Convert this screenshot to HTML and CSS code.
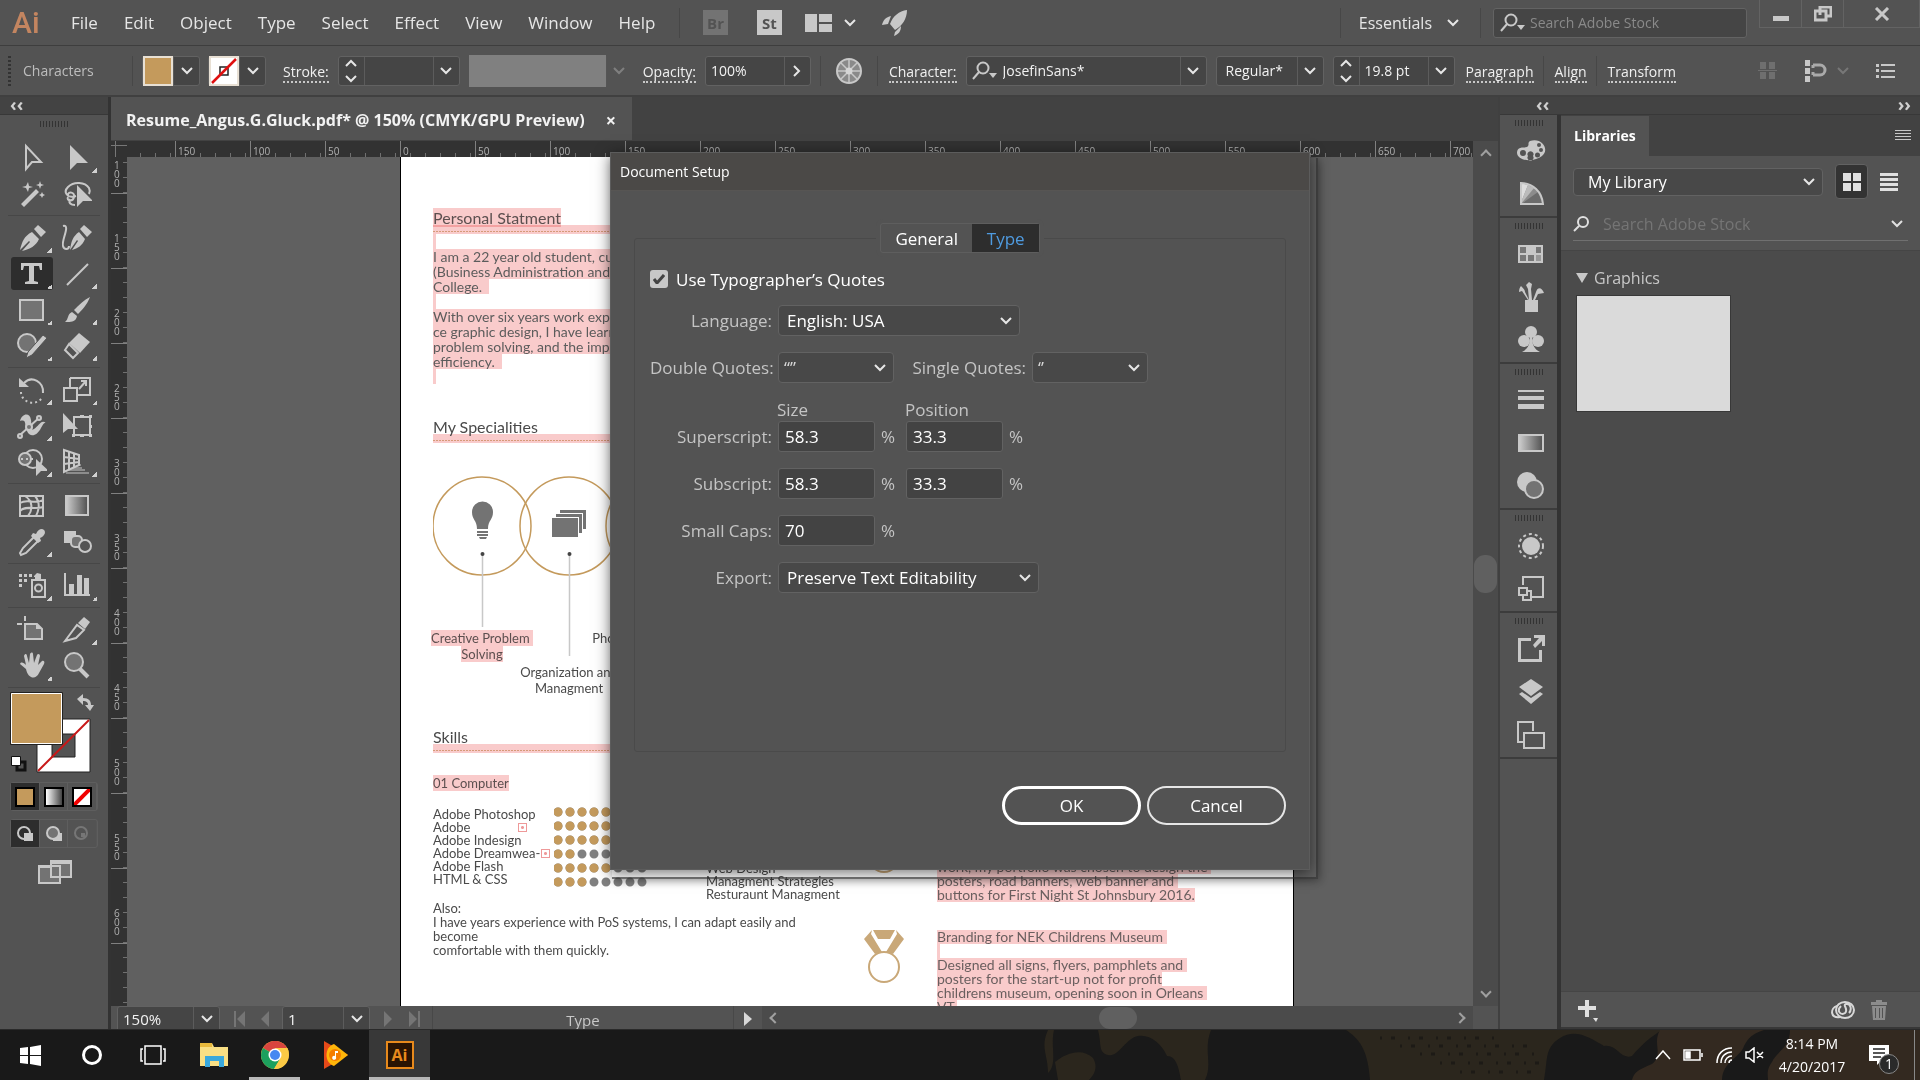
FILE: index.html
```html
<!DOCTYPE html>
<html lang="en">
<head>
<meta charset="UTF-8">
<title>Adobe Illustrator - Document Setup</title>
<link rel="stylesheet" href="styles.css">
</head>
<body>

<!-- menu bar -->
<header class="menubar">
  <div class="logo">Ai</div>
  <nav class="menu">
    <a href="#">File</a><a href="#">Edit</a><a href="#">Object</a><a href="#">Type</a><a href="#">Select</a><a href="#">Effect</a><a href="#">View</a><a href="#">Window</a><a href="#">Help</a>
  </nav>
  <span class="divider"></span>
  <div class="apps">
    <button class="app app-off">Br</button>
    <button class="app">St</button>
    <button class="plain arrange" aria-label="Arrange documents">
      <svg width="28" height="18" viewBox="0 0 28 18"><path d="M0 0h12v18H0zM14 0h13v8H14zM14 10h13v8H14z"/></svg>
      <svg class="chev" width="14" height="8" viewBox="0 0 14 8"><path d="M2 1l5 5 5-5"/></svg>
    </button>
    <button class="plain" aria-label="GPU performance"><svg width="28" height="26" viewBox="0 0 28 26"><path d="M26 0c-8 1-14 6-17 14l5 6C21 16 26 9 26 0zM10 6C5 7 2 10 1 15l6-1zM20 16l-6 6-1 4c5-2 7-5 7-10z"/></svg></button>
  </div>
  <div class="menu-right">
    <span class="divider"></span>
    <button class="plain essentials">Essentials <svg class="chev" width="14" height="8" viewBox="0 0 14 8"><path d="M2 1l5 5 5-5"/></svg></button>
    <span class="divider"></span>
    <label class="stock">
      <svg class="lens" width="26" height="20" viewBox="0 0 26 20"><circle cx="11" cy="7" r="5.5"/><path d="M7 11l-6 7"/><path class="solid" d="M17 12h8l-4 5z"/></svg>
      <input type="text" placeholder="Search Adobe Stock" aria-label="Search Adobe Stock">
    </label>
    <div class="win">
      <button aria-label="Minimize"><svg width="16" height="16"><path d="M0 10h16v5H0z"/></svg></button>
      <button aria-label="Restore"><svg width="18" height="16"><path class="ol" d="M6 9V1h11v9h-4M1 5h11v9H1z"/></svg></button>
      <button class="close" aria-label="Close"><svg width="16" height="14"><path class="ol" d="M2 1l12 12M14 1L2 13"/></svg></button>
    </div>
  </div>
</header>

<!-- control bar -->
<div class="control">
  <span class="grip-v"></span>
  <span class="context">Characters</span>
  <span class="divider"></span>
  <div class="swatch-pair">
    <div class="combo"><span class="sw gold"></span><button class="dd" aria-label="Fill"></button></div>
    <div class="combo"><span class="sw none"><svg width="26" height="26"><path d="M9 9h8v8H9z" fill="none" stroke="#222" stroke-width="1.500"/><path d="M1 25L25 1" stroke="#e01010" stroke-width="2.500"/></svg></span><button class="dd" aria-label="Stroke colour"></button></div>
  </div>
  <a class="link" href="#">Stroke:</a>
  <div class="combo"><span class="spin"></span><input class="w-stroke" type="text" aria-label="Stroke weight"><button class="dd" aria-label="Stroke weight list"></button></div>
  <div class="combo profile"><span></span><button class="dd" disabled aria-label="Profile"></button></div>
  <a class="link" href="#">Opacity:</a>
  <div class="combo"><input class="w-opacity" type="text" value="100%" aria-label="Opacity"><button class="dd right" aria-label="Opacity slider"></button></div>
  <span class="divider"></span>
  <button class="plain wheel" aria-label="Recolor artwork"><svg width="26" height="26" viewBox="0 0 26 26"><circle cx="13" cy="13" r="12" fill="#8a8a8a" stroke="#c8c8c8" stroke-width="2"/><path d="M13 2v22M2 13h22M5 5l16 16M21 5L5 21" stroke="#c8c8c8" stroke-width="1.500"/><circle cx="13" cy="13" r="3.500" fill="#d5d5d5"/></svg></button>
  <span class="divider"></span>
  <a class="link" href="#">Character:</a>
  <div class="combo font">
    <svg class="lens" width="26" height="20" viewBox="0 0 26 20"><circle cx="11" cy="7" r="5.5"/><path d="M7 11l-6 7"/><path class="solid" d="M17 12h8l-4 5z"/></svg>
    <input class="w-font" type="text" value="JosefinSans*" aria-label="Font family"><button class="dd" aria-label="Font list"></button>
  </div>
  <div class="combo"><input class="w-style" type="text" value="Regular*" aria-label="Font style"><button class="dd" aria-label="Style list"></button></div>
  <div class="combo"><span class="spin"></span><input class="w-size" type="text" value="19.8 pt" aria-label="Font size"><button class="dd" aria-label="Size list"></button></div>
  <a class="link" href="#">Paragraph</a>
  <span class="divider"></span>
  <a class="link" href="#">Align</a>
  <span class="divider"></span>
  <a class="link" href="#">Transform</a>
  <div class="control-right">
    <svg width="20" height="20"><path fill="#6f6f6f" d="M2 1h6v7H2zM11 1h6v7h-6zM2 11h6v7H2zM11 11h6v7h-6zM0 9h19v1H0z"/></svg>
    <svg width="46" height="22"><path d="M1 0h5v6H1zM1 8h5v6H1zM1 16h5v6H1z" fill="#c8c8c8"/><path d="M9 5h7a5 5 0 0 1 0 10H9M9 5v3M9 12v3" fill="none" stroke="#aaa" stroke-width="3"/><path d="M34 8l5 5 5-5" fill="none" stroke="#777" stroke-width="2"/></svg>
    <svg width="20" height="14"><path d="M0 0h3v3H0zM5 0h14v2H5zM0 5h3v3H0zM5 6h14v2H5zM0 11h3v3H0zM5 12h14v2H5z" fill="#c8c8c8"/></svg>
  </div>
</div>

<main class="work">
  <!-- tools -->
  <aside class="tools">
    <div class="collapse">&#8249;&#8249;</div>
    <div class="grip"></div>
    <div class="group first">
      <button aria-label="Selection"><svg class="ln" viewBox="0 0 30 30"><path d="M9 3v23l6-7h9z"/></svg></button>
      <button class="more" aria-label="Direct Selection"><svg viewBox="0 0 30 30"><path d="M8 2v25l7-7h11z"/></svg></button>
      <button aria-label="Magic Wand"><svg viewBox="0 0 30 30"><path d="M4 25L19 10l3 3L7 28zM11 3l1 4 4 1-4 1-1 4-2-4-4-1 4-1zM23 2l1 3 3 1-3 1-1 3-1-3-3-1 3-1zM25 13l1 2 2 1-2 1-1 2-1-2-2-1 2-1z"/></svg></button>
      <button aria-label="Lasso"><svg class="ln" viewBox="0 0 30 30"><path d="M14 17C5 20 1 13 6 8c6-6 17-5 21 1 1 2 1 4 0 6M6 16c0-4 7-3 6 2s-8 4-6 0M8 20c-2 4 1 6 5 6"/><path class="f" d="M15 6v22l6-6h10z"/></svg></button>
    </div>
    <div class="group">
      <button class="more" aria-label="Pen"><svg viewBox="0 0 30 30"><path d="M3 27c2-8 4-14 12-18l7 7c-3 7-9 10-17 12l8-9-1-1zM17 6l4-4 8 7-5 5z"/></svg></button>
      <button aria-label="Curvature"><svg viewBox="0 0 30 30"><path d="M8 27c1-8 3-14 9-18l6 7c-3 7-7 9-13 11l6-9-1-1zM18 6l4-4 8 7-5 5z"/><path class="o" d="M1 3c8-2-2 15 0 20 1 4 6 4 6 0"/></svg></button>
      <button class="more on" aria-label="Type"><svg viewBox="0 0 30 30"><path d="M4 4h21v7h-2l-1-4h-5v15l4 1v2H8v-2l4-1V7H7l-1 4H4z"/></svg></button>
      <button class="more" aria-label="Line"><svg class="ln" viewBox="0 0 30 30"><path d="M5 26L26 5"/></svg></button>
      <button class="more" aria-label="Rectangle"><svg class="ln" viewBox="0 0 30 30"><path class="g" d="M3 5h23v20H3z"/></svg></button>
      <button class="more" aria-label="Paintbrush"><svg viewBox="0 0 30 30"><path d="M28 2c-3 8-8 13-12 17l-4-4C17 10 22 5 28 2zM10 17l5 4c-1 7-8 6-12 6 4-3 2-8 7-10z"/></svg></button>
      <button class="more" aria-label="Shaper"><svg viewBox="0 0 30 30"><circle class="o g" cx="10" cy="12" r="9"/><path d="M26 4l4 3-15 17-6 3 2-6z" stroke="#535353"/></svg></button>
      <button class="more" aria-label="Eraser"><svg viewBox="0 0 30 30"><path d="M17 2l11 9-10 11L7 12z"/><path class="o" d="M7 13l9 9-5 5-8-8z"/></svg></button>
    </div>
    <div class="group">
      <button class="more" aria-label="Rotate"><svg class="ln" viewBox="0 0 30 30"><path d="M7 8c8-8 20-1 19 10"/><path class="f" d="M2 3v9h10z"/><path class="dots" d="M4 17c0 10 14 15 21 6"/></svg></button>
      <button class="more" aria-label="Scale"><svg class="ln" viewBox="0 0 30 30"><path d="M8 3h20v17H14M2 13h13v13H2zM8 13V3M17 14l7-8M19 6h5v5"/></svg></button>
      <button class="more" aria-label="Width"><svg class="ln" viewBox="0 0 30 30"><path class="f" d="M3 10c2-8 10-9 11-1 1 7-2 11 3 9 5-3 7-10 12-6-2-1-3 2-5 5-4 8-11 10-14 3-3-7 0-12-7-10z"/><path d="M3 24L23 6"/><circle class="g" cx="3" cy="25" r="2"/><circle class="g" cx="12" cy="16" r="3"/><circle class="g" cx="22" cy="7" r="2"/></svg></button>
      <button aria-label="Free Transform"><svg class="ln" viewBox="0 0 30 30"><path d="M12 6h16v18H12z"/><path class="f" d="M1 2v20l5-4h10zM18 4h4v3h-4zM27 4h3v3h-3zM27 14h3v3h-3zM27 23h3v3h-3zM18 23h4v3h-4zM10 23h3v3h-3z"/></svg></button>
      <button class="more" aria-label="Shape Builder"><svg class="ln" viewBox="0 0 30 30"><circle cx="16" cy="12" r="9"/><circle class="g" cx="8" cy="12" r="6"/><path class="dots" d="M4 12h13"/><path class="f" d="M19 12v17l5-5h8z"/></svg></button>
      <button class="more" aria-label="Perspective Grid"><svg class="ln" viewBox="0 0 30 30"><path d="M2 3l15 5v10L2 25zM7 5v18M12 7v13M2 10l15 2M2 17l15-2"/><path class="thin" d="M10 21h10M7 23h16M4 26h23M16 18h3"/></svg></button>
    </div>
    <div class="group">
      <button aria-label="Mesh"><svg class="ln" viewBox="0 0 30 30"><path d="M3 5h23v20H3zM8 5c8 5 8 14 3 20M18 5c5 6 4 14 1 20M3 12c8-5 14 2 23-3M3 20c5-6 15-1 23-4"/></svg></button>
      <button aria-label="Gradient"><span class="grad big"></span></button>
      <button class="more" aria-label="Eyedropper"><svg viewBox="0 0 30 30"><path class="o" d="M18 9l4 4L9 26l-5 2-1-2 3-5z"/><path d="M16 6l3 1c2-5 6-6 8-4s1 6-4 8l1 3-3 2-7-7z"/></svg></button>
      <button aria-label="Blend"><svg viewBox="0 0 30 30"><path d="M2 4h12v12H2z"/><rect class="o g" x="9" y="9" width="11" height="11" rx="4"/><circle class="o k" cx="23" cy="19" r="6"/></svg></button>
    </div>
    <div class="group">
      <button class="more" aria-label="Symbol Sprayer"><svg viewBox="0 0 30 30"><path d="M2 3h3v3H2zM7 3h3v3H7zM12 3h3v3h-3zM2 8h3v3H2zM7 8h3v3H7zM2 13h3v3H2zM17 5l3-3 4 1v3h-7z"/><path class="o" d="M15 9h13v17H15zM18 7h6"/><circle class="o" cx="21.500" cy="17" r="3.500"/></svg></button>
      <button class="more" aria-label="Column Graph"><svg viewBox="0 0 30 30"><path d="M2 2h2v21h24v2H2zM7 13h5v10H7zM15 4h5v19h-5zM22 7h5v16h-5z"/></svg></button>
    </div>
    <div class="group">
      <button aria-label="Artboard"><svg class="ln" viewBox="0 0 30 30"><path d="M8 1v5M0 9h5"/><path class="g" d="M8 9h12l5 5v10H8z"/><path class="f" d="M19 8v6h6z"/></svg></button>
      <button class="more" aria-label="Slice"><svg class="ln" viewBox="0 0 30 30"><path d="M3 26L15 10l7 5-8 8z"/><path class="f" d="M16 8l6-6 6 5-5 7z"/></svg></button>
      <button class="more" aria-label="Hand"><svg viewBox="0 0 30 30"><path d="M9 18L3 13c1-3 4-1 6 1L7 5c1-3 3-2 3 0l2 7 1-9c1-2 3-2 3 0l1 9 3-8c1-2 3-1 3 1l-2 9 4-4c2-1 3 1 2 3l-5 9c-3 7-11 6-13-4z"/></svg></button>
      <button aria-label="Zoom"><svg class="ln" viewBox="0 0 30 30"><circle class="g" cx="12" cy="11" r="9"/><path class="fat" d="M18 18l8 8"/></svg></button>
    </div>
    <div class="paint">
      <svg width="90" height="84" viewBox="0 0 90 84">
        <path d="M27 27h53v53H27zM42 42v23h23V42z" fill="#fff" fill-rule="evenodd" stroke="#222"/>
        <path d="M28 79L79 28" stroke="#c81818" stroke-width="2"/>
        <path d="M.5.500h52v52H.5z" fill="#c49a5c" stroke="#222"/><path d="M1.500 1.500h50v50h-50z" fill="none" stroke="#fff"/>
        <path d="M67 7l6-5v4c6 0 8 3 8 7h3l-4 6-5-6h3c0-3-2-4-5-4v4z" fill="#c8c8c8"/>
        <path d="M7 70h8v8H7z" fill="none" stroke="#111" stroke-width="3"/><path d="M1.500 64.500h9v9h-9z" fill="#fff" stroke="#111"/>
      </svg>
    </div>
    <div class="modes">
      <button class="on" aria-label="Color"><span class="chip gold"></span></button>
      <button aria-label="Gradient"><span class="chip grad"></span></button>
      <button aria-label="None"><svg class="chip" width="20" height="20"><path d="M0 0h20v20H0z" fill="#fff"/><path d="M-1 17L17-1" stroke="#f00000" stroke-width="4"/></svg></button>
    </div>
    <div class="modes">
      <button class="on" aria-label="Draw Normal"><svg width="18" height="18"><circle cx="8" cy="8" r="6" class="o"/><path d="M8 8h9v8H8z"/></svg></button>
      <button aria-label="Draw Behind"><svg width="18" height="18"><path d="M8 8h9v8H8z"/><circle cx="8" cy="8" r="6" class="o g"/></svg></button>
      <button class="off" aria-label="Draw Inside"><svg width="18" height="18"><circle cx="8" cy="8" r="6" class="o"/><path d="M8 8h4v4H8z"/></svg></button>
    </div>
    <button class="screen" aria-label="Screen Mode"><svg width="34" height="26"><path class="o g" d="M1 7h21v17H1zM13 2h20v16H13z"/><path d="M12 1h22v4H12zM0 6h12v3H0z"/></svg></button>
  </aside>

  <!-- document window -->
  <section class="doc">
    <div class="tabs"><div class="tab">Resume_Angus.G.Gluck.pdf* @ 150% (CMYK/GPU Preview)<button class="plain" aria-label="Close tab">&#215;</button></div></div>
    <div class="view">
      <div class="corner"></div>
      <div class="ruler-h"><span></span><span>150</span><span>100</span><span>50</span><span>0</span><span>50</span><span>100</span><span>150</span><span>200</span><span>250</span><span>300</span><span>350</span><span>400</span><span>450</span><span>500</span><span>550</span><span>600</span><span>650</span><span>700</span></div>
      <div class="ruler-v"><span>100</span><span>150</span><span>200</span><span>250</span><span>300</span><span>350</span><span>400</span><span>450</span><span>500</span><span>550</span><span>600</span></div>
      <div class="canvas">
        <article class="artboard">
          <div class="col-left">
            <h2><mark>Personal Statment</mark></h2>
            <div class="rule"></div>
            <p class="statement"><mark class="stub"></mark><br><mark>I am a 22 year old student, currently</mark><br><mark>(Business Administration and</mark><br><mark>College. &nbsp;</mark><br><mark class="stub"></mark><br><mark>With over six years work experien-</mark><br><mark>ce graphic design, I have learned</mark><br><mark>problem solving, and the importance</mark><br><mark>efficiency. &nbsp;</mark><br><mark class="stub"></mark></p>
            <h2 class="h-spec">My Specialities</h2>
            <div class="rule"></div>
            <div class="specs">
              <svg width="290" height="184" viewBox="0 0 290 184">
                <g fill="none" stroke="#c49a5c" stroke-width="1.500"><circle cx="49" cy="50" r="49"/><circle cx="136" cy="50" r="49"/><circle cx="222" cy="50" r="49"/></g>
                <g stroke="#c8c8c8"><path d="M49.500 78v73M136.500 78v102" stroke-width="1.500"/></g>
                <g fill="#444"><circle cx="49.500" cy="78" r="2"/><circle cx="136.500" cy="78" r="2"/></g>
                <g fill="#737373"><path d="M44 53c0-9-5-9-5-17a10.500 10.500 0 0 1 21 0c0 8-5 8-5 17zM44 55h11v2H44zM44 58h11v2H44zM46 61h8l-1 2h-6z"/><path d="M119 42h26v19h-26zM123 38h26v19h-3V41h-23zM127 34h26v19h-3V37h-23z"/></g>
              </svg>
              <div class="spec-names"><p><mark>Creative Problem&nbsp;</mark><br><mark>Solving</mark></p><p class="low">Organization and<br>Managment</p><p>Photography &amp; Videos</p></div>
            </div>
            <h2 class="h-skills">Skills</h2>
            <div class="rule"></div>
            <p class="sub"><mark>01 Computer</mark></p>
            <div class="skills">
              <p>Adobe Photoshop<br>Adobe <i class="over ill"></i><br>Adobe Indesign<br>Adobe Dreamwea-<i class="over"></i><br>Adobe Flash<br>HTML &amp; CSS</p>
              <svg width="94" height="84" viewBox="0 0 94 84">
                <g fill="none" stroke-width="9" stroke-linecap="round" stroke-dasharray="0 12">
                  <path d="M4 7h85M4 21h85M4 35h85M4 49h85M4 63h85M4 77h85" stroke="#808080"/>
                  <path d="M4 7h85M4 21h73M4 35h73M4 49h13M4 63h49M4 77h25" stroke="#c49a5c"/>
                </g>
              </svg>
              <p class="more-skills">Web Design<br>Managment Strategies<br>Resturaunt Managment</p>
            </div>
            <p class="also">Also:<br>I have years experience with PoS systems, I can adapt easily and<br>become<br>comfortable with them quickly.</p>
          </div>
          <div class="col-right">
            <div class="award">
              <svg width="40" height="54" viewBox="0 0 40 54"><path d="M8 0L0 9l11 15 7-2L7 4zM32 0l8 9-11 15-7-2L33 4zM9 0h22l-5 9H14z"/><circle cx="20" cy="37" r="15"/></svg>
              <p><mark>work, my portfolio was chosen to design the&nbsp;</mark><br><mark>posters, road banners, web banner and&nbsp;</mark><br><mark>buttons for First Night St Johnsbury 2016.</mark></p>
            </div>
            <div class="award">
              <svg width="40" height="54" viewBox="0 0 40 54"><path d="M8 0L0 9l11 15 7-2L7 4zM32 0l8 9-11 15-7-2L33 4zM9 0h22l-5 9H14z"/><circle cx="20" cy="37" r="15"/></svg>
              <p><mark>Branding for NEK Childrens Museum&nbsp;</mark><br><mark class="stub"></mark><br><mark>Designed all signs, flyers, pamphlets and&nbsp;</mark><br><mark>posters for the start-up not for profit</mark><br><mark>childrens museum, opening soon in Orleans&nbsp;</mark><br><mark>VT.</mark></p>
            </div>
          </div>
        </article>
      </div>
      <div class="scroll-v"><i class="up"></i><i class="thumb"></i><i class="down"></i></div>
    </div>
    <div class="status">
      <div class="combo"><input class="w-zoom" type="text" value="150%" aria-label="Zoom"><button class="dd" aria-label="Zoom list"></button></div>
      <svg class="nav" width="38" height="18"><path d="M1 1h2v16H1zM12 1v16L4 9zM36 1v16l-8-8z"/></svg>
      <div class="combo"><input class="w-page" type="text" value="1" aria-label="Artboard"><button class="dd" aria-label="Artboard list"></button></div>
      <svg class="nav" width="38" height="18"><path d="M1 1v16l8-8zM26 1v16l8-8zM35 1h2v16h-2z"/></svg>
      <span class="tool-name">Type</span>
      <svg class="play" width="12" height="14"><path d="M2 0v14l8-7z"/></svg>
      <div class="scroll-h"><i class="left"></i><i class="thumb"></i><i class="right"></i></div>
    </div>
  </section>

  <!-- right side panels -->
  <section class="side">
    <div class="collapse wide"><span>&#8249;&#8249;</span><span>&#8250;&#8250;</span></div>
    <div class="panels">
      <div class="dock">
        <div class="dock-group">
          <div class="grip"></div>
          <button aria-label="Color"><svg viewBox="0 0 30 30"><path fill-rule="evenodd" d="M14 5c12-4 20 9 12 15-7 6-24 6-25-3 0-7 7-5 10-6 3-2 0-4 3-6zM4 17a3 3 0 1 0 6 0 3 3 0 1 0-6 0zM12 20a3 3 0 1 0 5 0 3 3 0 1 0-5 0zM19 19a2 2 0 1 0 5 0 2 2 0 1 0-5 0zM23 14a2 2 0 1 0 4 0 2 2 0 1 0-4 0zM21 9a2 2 0 1 0 4 0 2 2 0 1 0-4 0z"/></svg></button>
          <button aria-label="Color Guide"><svg viewBox="0 0 30 30"><path d="M4 4c13 0 22 9 23 22H4z" fill="#8c8c8c"/><path d="M4 26V4l8 2z" fill="#ddd"/><path d="M4 26l8-20 6 3z" fill="#bbb"/><path d="M4 26L22 13l5 13z" fill="#6c6c6c"/><path class="o" d="M5 4c12 0 21 9 22 21H5z"/></svg></button>
        </div>
        <div class="dock-group">
          <div class="grip"></div>
          <button aria-label="Swatches"><svg viewBox="0 0 30 30"><path d="M2 6h25v18H2z"/><path fill="#777" d="M4 8h6v6H4zM20 8h5v6h-5zM4 16h6v6H4zM12 16h6v6h-6z"/><path fill="#999" d="M20 16h5v6h-5z"/></svg></button>
          <button aria-label="Brushes"><svg viewBox="0 0 30 30"><path d="M9 18h13v12H9zM12 18L6 9 3 10c0-3 1-5 2-6 3 3 4 4 4 6l4 8zM13 18L12 7l-2-4 3-3 3 2-1 5 1 11zM17 18l3-8c2-6 6-4 8 1l-6 1-3 6z"/></svg></button>
          <button aria-label="Symbols"><svg viewBox="0 0 30 30"><circle cx="15" cy="7" r="6"/><circle cx="8" cy="16" r="6"/><circle cx="22" cy="16" r="6"/><path d="M14 12h2c0 7 2 12 8 15H6c6-3 8-8 8-15z"/></svg></button>
        </div>
        <div class="dock-group">
          <div class="grip"></div>
          <button aria-label="Stroke"><svg viewBox="0 0 30 30"><path d="M2 5h26v2H2zM2 11h26v4H2zM2 19h26v5H2z"/></svg></button>
          <button aria-label="Gradient"><span class="grad"></span></button>
          <button aria-label="Transparency"><svg viewBox="0 0 30 30"><circle cx="11" cy="11" r="10"/><circle class="o g" cx="18" cy="18" r="9"/></svg></button>
        </div>
        <div class="dock-group">
          <div class="grip"></div>
          <button aria-label="Appearance"><svg viewBox="0 0 30 30"><circle cx="15" cy="15" r="9"/><circle cx="15" cy="15" r="12" fill="none" stroke="#c8c8c8" stroke-width="2" stroke-dasharray="3 3"/></svg></button>
          <button aria-label="Graphic Styles"><svg class="ln" viewBox="0 0 30 30"><path d="M7 11V3h20v20H16M3 14h8v7H3zM7 21v5h8V17h-4"/></svg></button>
        </div>
        <div class="dock-group">
          <div class="grip"></div>
          <button aria-label="Asset Export"><svg viewBox="0 0 30 30"><path d="M2 4h13v3H5v18h18V16h3v12H2zM18 1h11v11h-3V7l-7 7-2-3 6-7h-5z"/></svg></button>
          <button aria-label="Layers"><svg viewBox="0 0 30 30"><path d="M15 2l12 8-12 9L3 10zM3 17l3-2 9 6 9-6 3 2-12 10z"/></svg></button>
          <button aria-label="Artboards"><svg class="ln" viewBox="0 0 30 30"><path d="M7 22H2V2h15v9M8 13h20v15H8z"/></svg></button>
        </div>
      </div>

      <div class="library">
        <div class="lib-tabs"><span class="lib-tab">Libraries</span><svg width="16" height="12"><path d="M0 0h16v1H0zM0 3h16v1H0zM0 6h16v1H0zM0 9h16v1H0z"/></svg></div>
        <div class="lib-head">
          <div class="lib-row">
            <select aria-label="Library"><option>My Library</option></select>
            <button class="view-btn on" aria-label="Grid view"><svg width="18" height="18"><path d="M0 0h8v8H0zM10 0h8v8h-8zM0 10h8v8H0zM10 10h8v8h-8z"/></svg></button>
            <button class="view-btn list" aria-label="List view"><svg width="18" height="18"><path d="M0 0h18v3H0zM0 5h18v3H0zM0 10h18v3H0zM0 15h18v3H0z"/></svg></button>
          </div>
          <label class="lib-search">
            <svg width="16" height="16"><circle cx="10" cy="6" r="5"/><path d="M6 10l-5 5"/></svg>
            <input type="text" placeholder="Search Adobe Stock" aria-label="Search library">
            <svg width="14" height="8"><path d="M2 1l5 5 5-5"/></svg>
          </label>
        </div>
        <div class="lib-body">
          <h3><svg width="12" height="10"><path d="M0 0h12L6 10z"/></svg>Graphics</h3>
          <div class="asset"></div>
        </div>
        <div class="lib-foot">
          <svg width="22" height="24"><path d="M7 2h4v6h7v4h-7v7H7v-7H0V8h7zM15 20h5l-2 4z" fill="#e0e0e0"/></svg>
          <svg class="cc" width="26" height="20" viewBox="0 0 26 20"><ellipse cx="15" cy="10" rx="9" ry="8"/><path d="M10 17C0 19 0 8 7 6M11 6c-5 5 0 10 4 7 4-4-3-8 1-9 5-1 6 6 3 9"/></svg>
          <svg width="18" height="20"><path fill="#8c8c8c" d="M6 0h6v2h5v3H1V2h5zM2 6h14l-1 14H3zM5 8v10h1V8zM9 8v10h1V8zM12 8v10h1V8z" fill-rule="evenodd"/></svg>
        </div>
      </div>
    </div>
  </section>
</main>

<!-- windows taskbar -->
<footer class="taskbar">
  <svg class="wallpaper" viewBox="0 0 960 50" preserveAspectRatio="none">
    <path fill="#2b261d" d="M88 0c-8 18 0 24 0 43 10-10 2-26 6-43zM138 0c4 16 0 22 10 25s18-17 30-19 24 8 29 20c10 0 12 14 14 24h24c8-16-2-30 6-50zM386 0c12 8 22 18 24 50h174c4-20 0-32 16-42s30 0 44 8c14-2 16 14 28 10 12-14 20-20 30-26zM95 32c12-10 28-14 38-4 6 10 0 18-4 22H98z"/>
    <path fill="#332920" d="M700 0c-8 14 4 24-8 34-14 6-18 8-20 16h90c0-18 18-22 22-34 4-8 8-12 20-16zM830 0c0 18-14 22-18 32-6 8-4 14-4 18h152V0z"/>
    <path fill="none" stroke="#1d1a16" stroke-width="3" stroke-dasharray="2 9 4 13" d="M420 8h120M440 16h130M460 24h120M480 33h104M500 42h84"/>
  </svg>
  <button aria-label="Start"><svg width="22" height="22"><path d="M0 4l8-1v8H0zM10 3l11-2v10H10zM0 12h8v8l-8-1zM10 12h11v10l-11-2z" fill="#fff"/></svg></button>
  <button aria-label="Cortana"><svg width="22" height="22"><circle cx="11" cy="11" r="8.500" fill="none" stroke="#fff" stroke-width="3"/></svg></button>
  <button aria-label="Task View"><svg width="26" height="20"><path fill="none" stroke="#fff" stroke-width="1.500" d="M5 1h16v18H5zM3 4H1v12h2M23 4h2v12h-2"/></svg></button>
  <button aria-label="File Explorer"><svg width="30" height="26"><path d="M1 1h12l2 4h14v19H1z" fill="#f9df84"/><path d="M1 1h12v4H1z" fill="#e8b93c"/><path d="M6 14h19v11h-5v-6h-9v6H6z" fill="#3aa8dc"/></svg></button>
  <button class="running" aria-label="Chrome"><svg width="28" height="28" viewBox="0 0 28 28"><circle cx="14" cy="14" r="14" fill="#fc4"/><path d="M14 14L2 7C8-3 21-2 26 7z" fill="#d8453e"/><path d="M14 14L2 7c-5 9 0 20 11 21l6-10z" fill="#1da05e"/><path d="M14 7h12.500C31 17 23 29 13 28l6-10z" fill="#fcca45"/><circle cx="14" cy="14" r="6.500" fill="#fff"/><circle cx="14" cy="14" r="5" fill="#4688f1"/></svg></button>
  <button aria-label="Play Music"><svg width="26" height="28"><path d="M1 0l24 14L1 28z" fill="#e64a19"/><path d="M11 3l14 11-14 11C1 22 1 6 11 3z" fill="#ffb60a"/><circle cx="12" cy="14" r="6" fill="#f57c00"/><path d="M12 10h3v2h-2v4a2 2 0 1 1-1-1z" fill="#fff"/></svg></button>
  <button class="running current" aria-label="Illustrator"><span class="ai">Ai</span></button>
  <div class="tray">
    <svg width="16" height="10"><path d="M1 9l7-8 7 8"/></svg>
    <svg width="20" height="12"><path d="M1 1h16v10H1zM19 4v4"/><path d="M3 3h4v6H3z" fill="#fff"/></svg>
    <svg width="18" height="18"><path d="M2 17C2 8 8 2 17 2M6 17c0-7 5-11 11-11M10 17c0-4 3-7 7-7M14 17c0-2 1-3 3-3"/></svg>
    <svg width="20" height="16"><path d="M1 5h3l5-4v14l-5-4H1zM12 5l6 6M18 5l-6 6"/></svg>
    <div class="clock">8:14 PM<br>4/20/2017</div>
    <div class="notes"><svg width="20" height="20"><path fill="#fff" stroke="none" d="M0 0h20v16h-8l-4 4v-4H0z"/><path stroke="#222" d="M4 4h12M4 8h12M4 12h8"/></svg><b>1</b></div>
    <span class="peek"></span>
  </div>
</footer>

<!-- document setup dialog -->
<div class="ghost"></div>
<div class="dialog" role="dialog" aria-labelledby="dlg-title">
  <div class="title" id="dlg-title">Document Setup</div>
  <form class="setup">
    <div class="switch"><button type="button">General</button><button type="button" class="on">Type</button></div>
    <div class="box">
      <label class="check"><input type="checkbox" checked> Use Typographer’s Quotes</label>
      <div class="row">
        <label for="lang">Language:</label>
        <select id="lang" class="s-lang"><option>English: USA</option></select>
      </div>
      <div class="row">
        <label for="dq">Double Quotes:</label>
        <select id="dq" class="s-quote"><option>“”</option></select>
        <label for="sq" class="sq">Single Quotes:</label>
        <select id="sq" class="s-quote"><option>‘’</option></select>
      </div>
      <div class="heads"><span>Size</span><span>Position</span></div>
      <div class="row">
        <label for="sup">Superscript:</label>
        <input id="sup" type="text" value="58.3"><span class="pct">%</span><input type="text" value="33.3" aria-label="Superscript position"><span class="pct">%</span>
      </div>
      <div class="row">
        <label for="subs">Subscript:</label>
        <input id="subs" type="text" value="58.3"><span class="pct">%</span><input type="text" value="33.3" aria-label="Subscript position"><span class="pct">%</span>
      </div>
      <div class="row">
        <label for="caps">Small Caps:</label>
        <input id="caps" type="text" value="70"><span class="pct">%</span>
      </div>
      <div class="row">
        <label for="exp">Export:</label>
        <select id="exp" class="s-export"><option>Preserve Text Editability</option></select>
      </div>
    </div>
    <div class="actions"><button type="button" class="ok">OK</button><button type="button">Cancel</button></div>
  </form>
</div>

</body>
</html>
```
FILE: styles.css
```css
* {
  box-sizing: border-box;
}
body {
  margin: 0;
  height: 100vh;
  display: flex;
  flex-direction: column;
  position: relative;
  overflow: hidden;
  background: #535353;
  color: #e6e6e6;
  font-family: "Open Sans", "Noto Sans", sans-serif;
  font-size: 15px;
}
button, input, select {
  font: inherit;
  color: inherit;
  margin: 0;
  border-radius: 0;
}
button {
  padding: 0;
  border: 0;
  background: none;
}
a {
  color: inherit;
  text-decoration: none;
}
svg {
  display: block;
  flex: none;
  fill: #c8c8c8;
}
h2, h3, p {
  margin: 0;
  font-weight: normal;
}
.divider {
  width: 1px;
  height: 30px;
  background: #474747;
}
.chev path {
  fill: none;
  stroke: #e6e6e6;
  stroke-width: 2;
}
.lens {
  fill: none;
  stroke: #c8c8c8;
  stroke-width: 2;
}
.lens .solid {
  fill: #c8c8c8;
  stroke: none;
}
.gold {
  background: #c49a5c;
}

/* menu bar */
.menubar {
  flex: none;
  display: flex;
  align-items: center;
  height: 46px;
  border-bottom: 1px solid #3e3e3e;
}
.logo {
  width: 58px;
  padding-left: 12px;
  color: #c38560;
  font: 500 30px/40px Roboto, sans-serif;
}
.menu {
  display: flex;
  width: 621px;
  font-size: 17px;
}
.menu a {
  padding: 0 13px;
}
.apps {
  display: flex;
  align-items: center;
  padding-left: 23px;
}
.app {
  width: 25px;
  height: 25px;
  margin-right: 29px;
  background: #c8c8c8;
  color: #535353;
  font-weight: bold;
}
.app-off {
  background: #737373;
}
.arrange {
  display: flex;
  align-items: center;
  gap: 10px;
  margin: 0 24px 0 -6px;
}
.menu-right {
  align-self: stretch;
  margin-left: auto;
  display: flex;
  align-items: center;
}
.essentials {
  display: flex;
  align-items: center;
  gap: 14px;
  padding: 0 20px 0 18px;
  font-size: 16px;
}
.stock {
  display: flex;
  align-items: center;
  gap: 4px;
  width: 254px;
  height: 30px;
  margin: 0 12px;
  padding: 0 6px;
  background: #454545;
  border: 1px solid #636363;
  border-radius: 3px;
}
.stock input {
  flex: 1;
  min-width: 0;
  padding: 0;
  border: 0;
  background: none;
  font-size: 14px;
}
::placeholder {
  color: #8a8a8a;
  opacity: 1;
}
.win {
  display: flex;
  align-self: flex-start;
  height: 28px;
  border: 1px solid #636363;
  border-width: 0 0 1px 1px;
}
.win button {
  display: flex;
  align-items: center;
  justify-content: center;
  width: 42px;
  border-right: 1px solid #636363;
}
.win .close {
  width: 76px;
}
.win .ol {
  fill: none;
  stroke: #c8c8c8;
  stroke-width: 3;
}

/* control bar */
.control {
  flex: none;
  display: flex;
  align-items: center;
  gap: 9px;
  height: 51px;
  border-bottom: 2px solid #404040;
}
.grip-v {
  width: 3px;
  height: 30px;
  margin-left: 8px;
  background: repeating-linear-gradient(#333 0 2px, #535353 2px 4px);
}
.context {
  width: 103px;
  padding-left: 3px;
  color: #bdbdbd;
  font-size: 14px;
}
.swatch-pair {
  display: flex;
  gap: 8px;
  margin-right: 6px;
}
.link {
  border-bottom: 2px dotted #c8c8c8;
  line-height: 18px;
  font-size: 14px;
  color: #f0f0f0;
}
.combo {
  display: flex;
  align-items: center;
  height: 30px;
  background: #454545;
  border: 1px solid #626262;
  border-radius: 3px;
}
.combo input {
  height: 28px;
  padding: 0 5px;
  border: 0;
  background: none;
  font-size: 14px;
  color: #f2f2f2;
}
.dd {
  align-self: stretch;
  width: 26px;
  border-left: 1px solid #5c5c5c;
  background: url("data:image/svg+xml,%3Csvg xmlns='http://www.w3.org/2000/svg' width='12' height='8'%3E%3Cpath d='M1 1l5 5 5-5' fill='none' stroke='%23e6e6e6' stroke-width='2'/%3E%3C/svg%3E") no-repeat center;
}
.dd.right {
  background-image: url("data:image/svg+xml,%3Csvg xmlns='http://www.w3.org/2000/svg' width='8' height='12'%3E%3Cpath d='M1 1l5 5-5 5' fill='none' stroke='%23e6e6e6' stroke-width='2'/%3E%3C/svg%3E");
}
.dd:disabled {
  opacity: .3;
}
.sw {
  width: 30px;
  height: 30px;
  border: 2px solid #e8e0d4;
}
.sw.none {
  background: #fff;
}
.spin {
  align-self: stretch;
  width: 26px;
  border-right: 1px solid #5c5c5c;
  background: url("data:image/svg+xml,%3Csvg xmlns='http://www.w3.org/2000/svg' width='12' height='24'%3E%3Cpath d='M1 7l5-5 5 5M1 17l5 5 5-5' fill='none' stroke='%23e6e6e6' stroke-width='2'/%3E%3C/svg%3E") no-repeat center;
}
.control .link {
  margin: 5px 0 0 2px;
}
.w-stroke {
  width: 68px;
}
.profile {
  background: none;
  border: 0;
}
.profile span {
  width: 137px;
  height: 32px;
  background: #808080;
}
.w-opacity {
  width: 78px;
}
.wheel {
  margin: 0 6px;
}
.font {
  padding-left: 5px;
}
.w-font {
  width: 182px;
}
.w-style {
  width: 80px;
}
.combo .w-style {
  padding-left: 9px;
}
.w-size {
  width: 68px;
}
.control-right {
  display: flex;
  align-items: center;
  gap: 26px;
  margin: 0 24px 0 auto;
}

/* workspace */
.work {
  flex: 1;
  min-height: 0;
  display: flex;
}
.collapse {
  height: 18px;
  padding-left: 10px;
  background: #434343;
  border-bottom: 1px solid #383838;
  font: bold 18px/14px "Open Sans", sans-serif;
  color: #d0d0d0;
}
.grip {
  width: 28px;
  height: 6px;
  margin: 6px auto 9px;
  background: repeating-linear-gradient(90deg, #333 0 1px, #535353 1px 3px);
}

/* tools */
.tools {
  flex: none;
  width: 111px;
  border-right: 3px solid #333;
}
.group {
  display: grid;
  grid-template-columns: 42px 42px;
  grid-auto-rows: 33px;
  gap: 3px;
  margin: 0 8px;
  padding: 5px 3px;
  border-bottom: 1px solid #474747;
}
.group button {
  position: relative;
  display: flex;
  align-items: center;
  justify-content: center;
  border-radius: 3px;
}
.group svg {
  width: 30px;
  height: 30px;
}
.group .on {
  background: #2d2d2d;
}
.more::after {
  content: "";
  position: absolute;
  right: 1px;
  bottom: 1px;
  width: 5px;
  height: 5px;
  background: linear-gradient(135deg, transparent 50%, #d0d0d0 50%);
}
.ln {
  fill: none;
  stroke: #c8c8c8;
  stroke-width: 2;
}
.ln .f {
  fill: #c8c8c8;
  stroke: none;
}
.o {
  fill: none;
  stroke: #c8c8c8;
  stroke-width: 2;
}
.g {
  fill: #737373;
}
.k {
  fill: #535353;
}
.fat {
  stroke-width: 4;
}
.thin {
  stroke-width: 1;
}
.dots {
  stroke-dasharray: 2 3;
}
.grad {
  width: 26px;
  height: 18px;
  border: 2px solid #c8c8c8;
  background: linear-gradient(90deg, #c8c8c8, #555);
}
.grad.big {
  width: 24px;
  height: 21px;
}
.paint {
  padding: 4px 0 0 10px;
  height: 94px;
}
.modes {
  display: flex;
  width: 88px;
  height: 29px;
  margin: 0 0 8px 10px;
  border: 1px solid #5e5e5e;
  border-radius: 3px;
}
.modes button {
  flex: 1;
  display: flex;
  align-items: center;
  justify-content: center;
  border-right: 1px solid #5e5e5e;
}
.modes .on {
  background: #2d2d2d;
}
.modes .off {
  opacity: .3;
}
.chip {
  width: 20px;
  height: 20px;
  border: 2px solid #000;
}
.chip.grad {
  background: linear-gradient(90deg, #fff, #444);
}
.screen {
  margin: 3px 0 0 38px;
}

/* document */
.doc {
  flex: 1;
  min-width: 0;
  display: flex;
  flex-direction: column;
}
.tabs {
  flex: none;
  height: 44px;
  background: #424242;
}
.tab {
  display: flex;
  align-items: center;
  justify-content: space-between;
  width: 521px;
  height: 43px;
  padding: 2px 16px 0 15px;
  background: #535353;
  font-size: 16px;
  font-weight: bold;
  color: #f2f2f2;
}
.tab .plain {
  font-size: 18px;
  line-height: 20px;
}
.view {
  flex: 1;
  min-height: 0;
  display: grid;
  grid-template: 16px 1fr / 16px 1fr 25px;
  background: #323232;
}
.corner {
  background: linear-gradient(#777, #777) 4px 0 / 1px 100% no-repeat, linear-gradient(#777, #777) 0 4px / 100% 1px no-repeat;
}
.ruler-h, .ruler-v {
  overflow: hidden;
  display: flex;
  font-size: 10px;
  color: #b0b0b0;
}
.ruler-h {
  background: repeating-linear-gradient(90deg, #707070 0 1px, transparent 1px 15px) -2px 12px / 100% 4px repeat-x;
}
.ruler-h span {
  flex: none;
  width: 75px;
  padding-left: 2px;
  border-left: 1px solid #808080;
  line-height: 20px;
}
.ruler-h span:first-child {
  width: 48px;
  border: 0;
}
.ruler-v {
  flex-direction: column;
  background: repeating-linear-gradient(#707070 0 1px, transparent 1px 15px) 12px 5px / 4px 100% no-repeat;
}
.ruler-v span {
  flex: none;
  width: 100%;
  height: 75px;
  padding: 40px 6px 0 3px;
  border-bottom: 1px solid #808080;
  line-height: 9px;
  word-break: break-all;
}
.ruler-v span:first-child {
  height: 37px;
  padding-top: 4px;
}
.canvas {
  overflow: hidden;
  background: #606060;
}
.scroll-v {
  grid-area: 1 / 3 / 3 / 4;
  display: flex;
  flex-direction: column;
  justify-content: space-between;
  align-items: center;
  padding: 10px 0;
  background: #4b4b4b;
}
.scroll-v i, .scroll-h i {
  width: 8px;
  height: 8px;
  border: 2px solid #a0a0a0;
  border-width: 2px 0 0 2px;
}
.up {
  transform: rotate(45deg);
}
.down {
  transform: rotate(225deg);
}
.left {
  transform: rotate(-45deg);
}
.scroll-h .right {
  transform: rotate(135deg);
}
.scroll-v .thumb {
  width: 23px;
  height: 38px;
  border: 0;
  border-radius: 11px;
  background: #606060;
}
.scroll-h .thumb {
  width: 38px;
  height: 22px;
  border: 0;
  border-radius: 11px;
  background: #606060;
}

/* artboard */
.artboard {
  display: grid;
  grid-template-columns: 431px 1fr;
  width: 894px;
  height: 100%;
  margin-left: 273px;
  padding-left: 32px;
  overflow: hidden;
  background: #fff;
  border: 1px solid #000;
  border-width: 0 1px;
  color: #4a4a4a;
  font-family: Lato, "Open Sans", sans-serif;
  font-size: 13px;
  line-height: 14px;
  white-space: nowrap;
}
/* multiply keeps the descenders of the line above */
mark {
  background: #f9cbcb;
  color: #5c4f4f;
  mix-blend-mode: multiply;
}
.stub {
  display: inline-block;
  width: 3px;
  height: 14px;
  vertical-align: top;
}
.artboard h2 {
  height: 15px;
  font-size: 16px;
  line-height: 15px;
}
.col-left {
  padding-top: 53px;
}
.rule {
  width: 405px;
  height: 9px;
  background: linear-gradient(90deg, #d59a78 67%, transparent 0) 0 6px / 3px 1px repeat-x, #f9cbcb;
}
.statement {
  font-size: 14px;
  line-height: 15px;
}
.statement mark, .award mark {
  display: inline-block;
  height: 15px;
  vertical-align: top;
}
.statement mark {
  color: #5c5c5c;
}
.artboard .h-spec {
  margin-top: 35px;
}
.specs {
  height: 258px;
  padding-top: 33px;
}
.specs svg {
  margin-bottom: -32px;
}
.spec-names {
  display: grid;
  grid-template-columns: 98px 76px 98px;
  justify-items: center;
  padding-top: 2px;
  line-height: 16px;
}
.spec-names p {
  text-align: center;
}
.spec-names .low {
  padding-top: 34px;
}
.artboard .h-skills {
  height: 14px;
  margin-top: 29px;
  line-height: 14px;
}
.sub {
  padding: 23px 0 15px;
}
.skills {
  display: grid;
  grid-template-columns: 121px 152px 1fr;
  height: 84px;
  line-height: 13px;
}
.skills p {
  padding-top: 3px;
}
.skills .more-skills {
  padding-top: 57px;
}
.over {
  display: inline-block;
  width: 9px;
  height: 9px;
  margin-left: 1px;
  border: 1px solid #ee9999;
  background: radial-gradient(#ee9999 1px, transparent 2px);
}
.ill {
  margin-left: 44px;
}
.also {
  padding-top: 12px;
}
.col-right {
  padding-top: 703px;
}
.award {
  display: grid;
  grid-template-columns: 73px 1fr;
  margin-bottom: 28px;
  font-size: 14px;
}
.award svg {
  fill: #c9a878;
}
.award:first-child svg {
  margin-top: -40px;
}
.award circle {
  fill: none;
  stroke: #c9a878;
  stroke-width: 2;
}
.award mark {
  height: 14px;
  color: #6a5f5f;
}

/* status bar */
.status {
  flex: none;
  display: flex;
  height: 23px;
  padding-left: 6px;
  overflow: hidden;
}
.status .combo {
  height: 26px;
}
.status input {
  font-size: 15px;
}
.w-zoom {
  width: 75px;
}
.w-page {
  width: 60px;
}
.nav {
  margin: 4px 11px 0 13px;
  fill: #757575;
}
.tool-name {
  width: 302px;
  border: 1px solid #484848;
  border-width: 0 1px;
  text-align: center;
  line-height: 28px;
  color: #c8c8c8;
}
.play {
  margin: 6px 8px 0;
  fill: #d8d8d8;
}
.scroll-h {
  flex: 1;
  display: flex;
  align-items: center;
  justify-content: space-between;
  margin-right: 25px;
  padding: 0 9px;
  background: #4b4b4b;
}

/* right side */
.side {
  flex: none;
  width: 422px;
  display: flex;
  flex-direction: column;
  border-left: 2px solid #404040;
}
.wide {
  flex: none;
  display: flex;
  justify-content: space-between;
  padding: 0 9px 0 36px;
}
.panels {
  flex: 1;
  min-height: 0;
  display: flex;
}
.dock {
  width: 61px;
  border-right: 4px solid #333;
}
.dock-group {
  padding: 5px 0 3px;
  border-bottom: 2px solid #3c3c3c;
}
.dock .grip {
  margin: 0 auto 1px;
}
.dock button {
  display: flex;
  align-items: center;
  justify-content: center;
  width: 57px;
  height: 43px;
  padding: 4px 0 0 5px;
}
.dock svg {
  width: 30px;
  height: 30px;
}
.library {
  flex: 1;
  display: flex;
  flex-direction: column;
  background: #4b4b4b;
}
.lib-tabs {
  display: flex;
  align-items: center;
  justify-content: space-between;
  height: 41px;
  padding-right: 9px;
  background: #424242;
}
.lib-tab {
  padding: 0 13px;
  background: #535353;
  font-size: 14px;
  font-weight: bold;
  line-height: 40px;
  color: #fff;
}
.lib-head {
  padding: 8px 12px 9px;
  background: #535353;
  border-bottom: 1px solid #454545;
}
.lib-row {
  display: flex;
  align-items: center;
  gap: 12px;
  padding-right: 10px;
}
select {
  appearance: none;
  border: 1px solid #626262;
  border-radius: 4px;
  background: #484848 url("data:image/svg+xml,%3Csvg xmlns='http://www.w3.org/2000/svg' width='12' height='8'%3E%3Cpath d='M1 1l5 5 5-5' fill='none' stroke='%23e6e6e6' stroke-width='2'/%3E%3C/svg%3E") no-repeat right 7px center;
}
.lib-row select {
  flex: 1;
  height: 28px;
  padding: 0 14px;
  font-size: 16px;
  color: #fff;
}
.view-btn {
  display: flex;
  align-items: center;
  justify-content: center;
  width: 33px;
  height: 35px;
  border-radius: 4px;
}
.view-btn.on {
  background: #333;
  border: 1px solid #626262;
}
.view-btn.list {
  width: 18px;
}
.view-btn svg {
  fill: #e0e0e0;
}
.lib-search {
  display: flex;
  align-items: center;
  gap: 14px;
  height: 42px;
  padding: 8px 4px 0 0;
  border-bottom: 1px solid #707070;
}
.lib-search svg {
  fill: none;
  stroke: #e0e0e0;
  stroke-width: 2;
}
.lib-search input {
  flex: 1;
  min-width: 0;
  padding: 0;
  border: 0;
  background: none;
  font-size: 16px;
}
.lib-search ::placeholder {
  color: #757575;
}
.lib-body {
  flex: 1;
  padding: 16px 15px;
}
.lib-body h3 {
  display: flex;
  align-items: center;
  gap: 6px;
  margin-bottom: 6px;
  font-size: 16px;
  line-height: 22px;
  color: #c8c8c8;
}
.asset {
  width: 155px;
  height: 117px;
  background: #dadada;
  border: 1px solid #383838;
}
.lib-foot {
  display: flex;
  align-items: center;
  gap: 14px;
  height: 38px;
  padding: 0 32px 0 17px;
  background: #535353;
  border-top: 1px solid #454545;
  border-bottom: 2px solid #383838;
}
.cc {
  margin-left: auto;
  fill: none;
  stroke: #d8d8d8;
  stroke-width: 2;
}

/* taskbar */
.taskbar {
  position: relative;
  flex: none;
  display: flex;
  height: 51px;
  background: #191919;
  border-top: 1px solid #2a2a2a;
}
.wallpaper {
  position: absolute;
  right: 0;
  width: 50%;
  height: 50px;
}
.taskbar button {
  display: flex;
  align-items: center;
  justify-content: center;
  width: 61px;
}
.running {
  border-bottom: 3px solid #b8b8b8;
}
.taskbar .running {
  padding-top: 3px;
}
.taskbar .running:not(.current) {
  width: 51px;
  margin: 0 5px;
}
.taskbar .current {
  margin-left: 3px;
  background: #383838;
}
.ai {
  width: 28px;
  height: 28px;
  border: 2px solid #e88a1c;
  background: #2a1403;
  color: #e88a1c;
  font: bold 16px/24px "Open Sans", sans-serif;
}
.tray {
  position: relative;
  display: flex;
  align-items: center;
  margin-left: auto;
  color: #fff;
}
.tray svg {
  margin-right: 12px;
  fill: none;
  stroke: #fff;
  stroke-width: 1.5;
}
.clock {
  width: 70px;
  text-align: center;
  font-size: 14px;
  line-height: 23px;
}
.notes {
  position: relative;
  width: 52px;
  padding-left: 22px;
}
.notes b {
  position: absolute;
  left: 32px;
  top: 9px;
  width: 20px;
  height: 20px;
  border: 1px solid #888;
  border-radius: 50%;
  background: #2a2a2a;
  text-align: center;
  font: 14px/18px "Open Sans", sans-serif;
}
.peek {
  width: 6px;
  height: 50px;
  margin-left: 15px;
  border-left: 1px solid #888;
}

/* document setup dialog */
.ghost {
  position: absolute;
  left: 612px;
  top: 158px;
  width: 706px;
  height: 721px;
  border: 2px solid rgba(50, 50, 50, .65);
  border-width: 0 2px 2px 0;
  box-shadow: 2px 2px 8px rgba(0, 0, 0, .3);
}
.dialog {
  position: absolute;
  left: 610px;
  top: 152px;
  width: 700px;
  height: 718px;
  background: #535353;
  border: 1px solid #5c5c5c;
  box-shadow: 0 3px 14px rgba(0, 0, 0, .55);
}
.title {
  height: 38px;
  padding-left: 9px;
  background: #4b4947;
  border-bottom: 1px solid #575553;
  font-size: 14px;
  line-height: 37px;
  color: #fff;
}
.setup {
  padding: 32px 23px;
  font-size: 17px;
}
.switch {
  position: relative;
  display: flex;
  width: 160px;
  height: 30px;
  margin: 0 auto -15px;
  background: #535353;
  border: 1px solid #5e5e5e;
  border-radius: 3px;
  box-shadow: 0 0 0 4px #535353;
  color: #fff;
}
.switch button {
  flex: 1 0 auto;
  padding: 0 12px;
}
.switch .on {
  background: #2d2d2d;
  color: #4f9be0;
}
.box {
  height: 514px;
  padding: 28px 15px;
  border: 1px solid #4a4a4a;
  border-radius: 3px;
}
.check {
  display: flex;
  align-items: center;
  gap: 8px;
  height: 24px;
  margin-bottom: 14px;
  color: #fff;
}
.check input {
  appearance: none;
  width: 18px;
  height: 18px;
  border-radius: 3px;
  background: #c8c8c8 url("data:image/svg+xml,%3Csvg xmlns='http://www.w3.org/2000/svg' width='12' height='10'%3E%3Cpath d='M1 5l3 4 7-8' fill='none' stroke='%23444' stroke-width='3'/%3E%3C/svg%3E") no-repeat center;
}
.row {
  display: flex;
  align-items: center;
  height: 31px;
  margin-bottom: 16px;
  color: #c4c4c4;
}
.row label {
  width: 122px;
  margin-right: 6px;
  text-align: right;
  white-space: nowrap;
}
.row .sq {
  width: 132px;
}
.row select, .row input {
  height: 31px;
  color: #fff;
}
.row select {
  padding: 0 8px;
}
.row input {
  width: 97px;
  padding: 0 6px;
  border: 1px solid #626262;
  border-radius: 3px;
  background: #434343;
}
.s-lang {
  width: 242px;
}
.row .s-quote {
  width: 116px;
  padding: 0 5px;
  color: #d8d8d8;
}
.s-export {
  width: 261px;
}
.pct {
  width: 31px;
  padding-left: 6px;
}
.heads {
  display: flex;
  padding-left: 127px;
  line-height: 22px;
  color: #c4c4c4;
}
.heads span {
  width: 128px;
}
.actions {
  display: flex;
  justify-content: flex-end;
  gap: 6px;
  padding-top: 34px;
}
.actions button {
  width: 139px;
  height: 39px;
  border: 2px solid #e6e6e6;
  border-radius: 20px;
  color: #fff;
}
.actions .ok {
  border: 3px solid #fff;
}
```
